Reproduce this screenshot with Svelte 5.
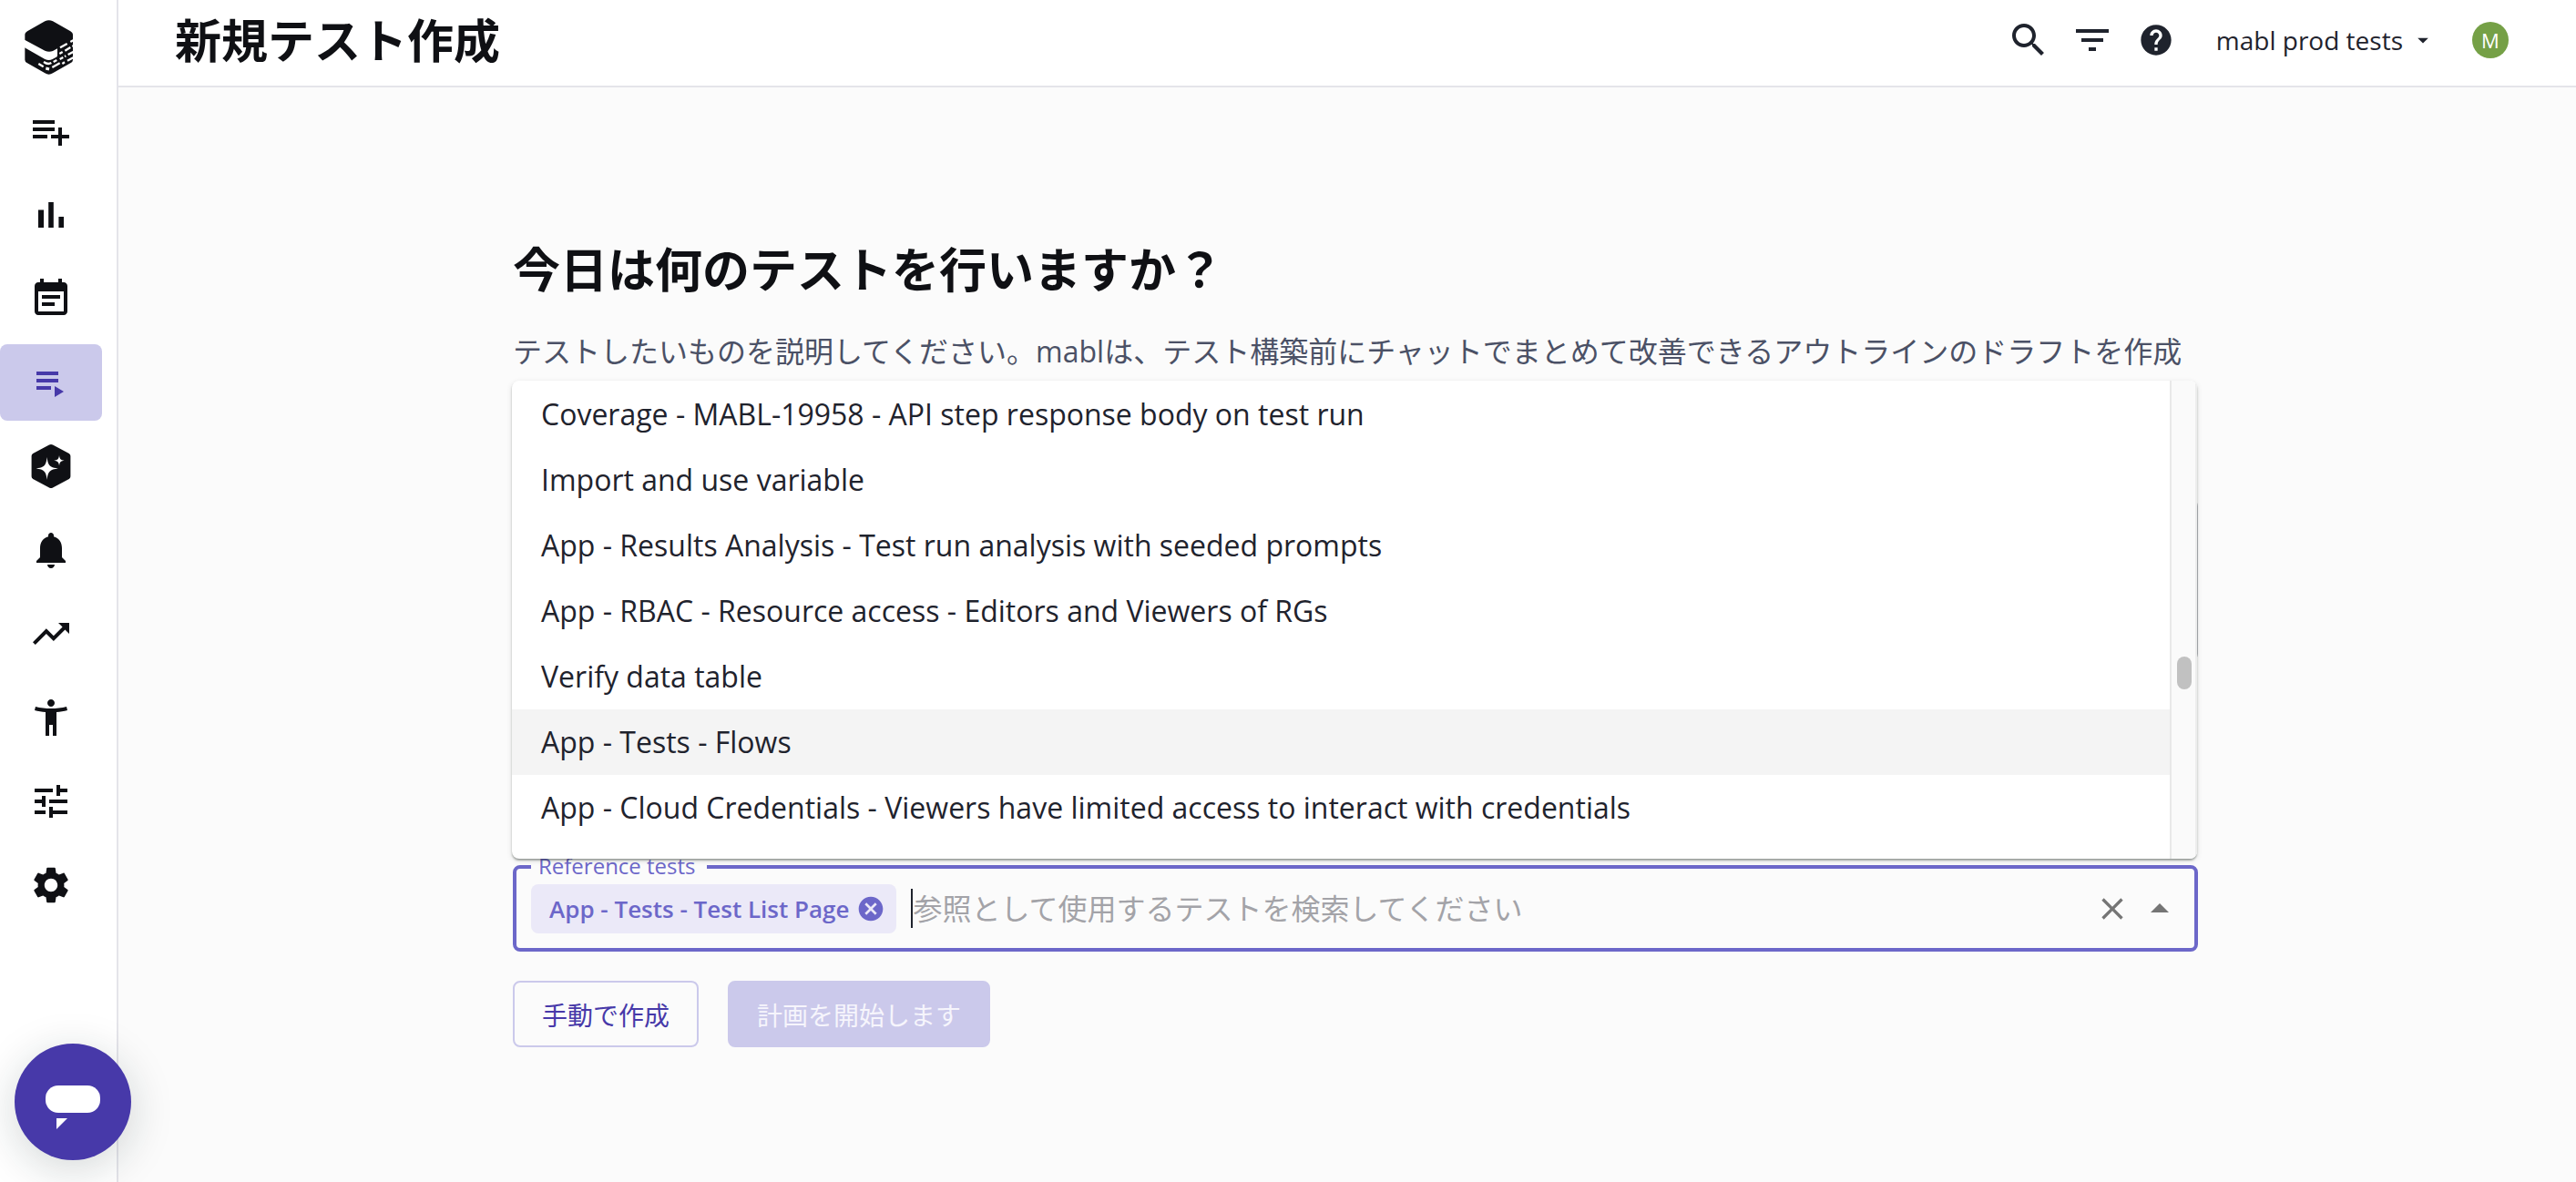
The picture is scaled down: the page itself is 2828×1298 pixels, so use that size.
<script>
  const navItems = [
    { label: '新規作成', d: 'M14 10H2v2h12v-2zm0-4H2v2h12V6zm4 8v-4h-2v4h-4v2h4v4h2v-4h4v-2h-4zM2 16h8v-2H2v2z' },
    { label: 'ダッシュボード', d: 'M5 9.2h3V19H5V9.2zM10.6 5h2.8v14h-2.8V5zm5.6 8H19v6h-2.8v-6z' },
    { label: 'プラン', d: 'M17 10H7v2h10v-2zm2-7h-1V1h-2v2H8V1H6v2H5c-1.11 0-1.99.9-1.99 2L3 19c0 1.1.89 2 2 2h14c1.1 0 2-.9 2-2V5c0-1.1-.9-2-2-2zm0 16H5V8h14v11zm-5-5H7v2h7v-2z' },
    { label: 'テスト', active: true, d: 'M4 10h12v2H4zm0-4h12v2H4zm0 8h8v2H4zm10 0v6l5-3z' },
    { label: 'AI', d: 'M11 .3Q12-.3 13 .3L21.900 5Q22.700 5.500 22.700 6.400V17.600Q22.700 18.500 21.900 19L13 23.700Q12 24.300 11 23.700L2.100 19Q1.300 18.500 1.300 17.600V6.400Q1.300 5.500 2.100 5ZM9.800 7C9.300 11.500 8.300 12.700 3.800 13.200C8.300 13.700 9.300 14.900 9.800 19.400C10.300 14.900 11.300 13.700 15.900 13.200C11.300 12.700 10.300 11.500 9.800 7ZM16.500 6C16.200 8.100 15.700 8.600 13.600 8.900C15.700 9.200 16.200 9.700 16.500 11.600C16.800 9.700 17.300 9.200 19.300 8.900C17.300 8.600 16.800 8.100 16.500 6Z' },
    { label: '通知', d: 'M12 22c1.100 0 2-.9 2-2h-4c0 1.100.89 2 2 2zm6-6v-5c0-3.070-1.640-5.640-4.500-6.320V4c0-.83-.67-1.500-1.500-1.500s-1.500.67-1.500 1.500v.68C7.630 5.360 6 7.920 6 11v5l-2 2v1h16v-1l-2-2z' },
    { label: 'トレンド', d: 'M16 6l2.290 2.290-4.880 4.880-4-4L2 16.590 3.410 18l6-6 4 4 6.300-6.290L22 12V6z' },
    { label: 'アクセシビリティ', d: 'M20.500 6c-2.610.7-5.670 1-8.500 1s-5.890-.3-8.500-1L3 8c1.860.5 4 .83 6 1v13h2v-6h2v6h2V9c2-.17 4.140-.5 6-1l-.5-2zM12 6c1.100 0 2-.9 2-2s-.9-2-2-2-2 .9-2 2 .9 2 2 2z' },
    { label: '構成', d: 'M3 17v2h6v-2H3zM3 5v2h10V5H3zm10 16v-2h8v-2h-8v-2h-2v6h2zM7 9v2H3v2h4v2h2V9H7zm14 4v-2H11v2h10zm-6-4h2V7h4V5h-4V3h-2v6z' },
    { label: '設定', d: 'M19.140 12.940c.04-.3.06-.61.06-.94 0-.32-.02-.64-.07-.94l2.030-1.580c.18-.14.23-.41.12-.61l-1.920-3.320c-.12-.22-.37-.29-.59-.22l-2.390.96c-.5-.38-1.030-.7-1.620-.94l-.36-2.540c-.04-.24-.24-.41-.48-.41h-3.840c-.24 0-.43.17-.47.41l-.36 2.540c-.59.24-1.130.57-1.620.94l-2.390-.96c-.22-.08-.47 0-.59.22L2.740 8.870c-.12.21-.08.47.12.61l2.030 1.580c-.05.3-.09.63-.09.94s.02.64.07.94l-2.030 1.580c-.18.14-.23.41-.12.61l1.920 3.320c.12.22.37.29.59.22l2.390-.96c.5.38 1.030.7 1.620.94l.36 2.540c.05.24.24.41.48.41h3.840c.24 0 .44-.17.47-.41l.36-2.540c.59-.24 1.130-.56 1.620-.94l2.390.96c.22.08.47 0 .59-.22l1.920-3.320c.12-.22.07-.47-.12-.61l-2.010-1.580zM12 15.600c-1.980 0-3.600-1.620-3.600-3.600s1.620-3.600 3.600-3.600 3.600 1.620 3.600 3.600-1.620 3.600-3.600 3.600z' }
  ];

  const options = [
    'Coverage - MABL-19958 - API step response body on test run',
    'Import and use variable',
    'App - Results Analysis - Test run analysis with seeded prompts',
    'App - RBAC - Resource access - Editors and Viewers of RGs',
    'Verify data table',
    'App - Tests - Flows',
    'App - Cloud Credentials - Viewers have limited access to interact with credentials'
  ];
  const highlighted = 5;
  let query = $state('');
</script>

<div class="app">
  <aside class="sidebar">
    <a class="logo" href="#home" aria-label="mabl">
      <svg viewBox="81 66 159 180" width="53" height="60" aria-hidden="true">
        <path fill="#0f1014" d="M148 70Q161 63 174 70L232 103Q240 108 240 113V197Q240 204 232 208L174 241Q161 249 148 241L90 208Q82 204 82 197V113Q82 108 90 103Z" />
        <path fill="#fff" d="M81 131L148 167Q161 173 174 168L189 160V182Q189 187 184 189L173 195Q161 201 148 195L81 157Z" />
        <g stroke="#fff" stroke-width="7" fill="none">
          <path d="M198 157L221 144M232 138L241 133M196 177L206 171M214 167L232 156M238 153L242 151" />
          <path d="M197 195L208 189M224 180L241 171M172 222L197 208M205 210L213 205M222 200L241 190M176 204L187 198M213 186L217 184" />
          <path d="M144 204Q158 214 169 207M127 210L143 220" />
          <path d="M151 225L162 228" stroke-width="9" />
        </g>
      </svg>
    </a>
    <nav class="nav">
      {#each navItems as item}
        <a class="nav-item" class:active={item.active} href="#nav" aria-label={item.label}>
          <svg viewBox="0 0 24 24" width="48" height="48" aria-hidden="true"><path fill-rule="evenodd" d={item.d} /></svg>
        </a>
      {/each}
    </nav>
  </aside>

  <div class="page">
    <header class="topbar">
      <h1>新規テスト作成</h1>
      <div class="tools">
        <button class="icon-btn" aria-label="検索">
          <svg viewBox="0 0 24 24" width="48" height="48"><path d="M15.500 14h-.79l-.28-.27C15.410 12.590 16 11.110 16 9.500 16 5.910 13.090 3 9.500 3S3 5.910 3 9.500 5.910 16 9.500 16c1.610 0 3.090-.59 4.230-1.570l.27.28v.79l5 4.990L20.490 19l-4.990-5zm-6 0C7.010 14 5 11.990 5 9.500S7.010 5 9.500 5 14 7.010 14 9.500 11.990 14 9.500 14z" /></svg>
        </button>
        <button class="icon-btn" aria-label="フィルター">
          <svg viewBox="0 0 24 24" width="48" height="48"><path d="M10 18h4v-2h-4v2zM3 6v2h18V6H3zm3 7h12v-2H6v2z" /></svg>
        </button>
        <button class="icon-btn" aria-label="ヘルプ">
          <svg viewBox="0 0 24 24" width="40" height="40"><path d="M12 2C6.480 2 2 6.480 2 12s4.480 10 10 10 10-4.480 10-10S17.520 2 12 2zm1 17h-2v-2h2v2zm2.070-7.750l-.9.920C13.450 12.900 13 13.500 13 15h-2v-.5c0-1.100.45-2.100 1.170-2.830l1.240-1.260c.37-.36.59-.86.59-1.410 0-1.100-.9-2-2-2s-2 .9-2 2H8c0-2.210 1.790-4 4-4s4 1.790 4 4c0 .88-.36 1.680-.93 2.250z" /></svg>
        </button>
      </div>
      <button class="workspace">
        mabl prod tests
        <svg viewBox="0 0 24 24" width="28" height="28" aria-hidden="true"><path d="M7 10l5 5 5-5z" /></svg>
      </button>
      <button class="avatar" aria-label="アカウント">M</button>
    </header>

    <main>
      <div class="content">
        <h2>今日は何のテストを行いますか？</h2>
        <p class="lead">テストしたいものを説明してください。mablは、テスト構築前にチャットでまとめて改善できるアウトラインのドラフトを作成</p>
        <textarea class="prompt" aria-label="テストの説明"></textarea>

        <div class="field">
          <label for="reference-tests">Reference tests</label>
          <span class="chip">
            App - Tests - Test List Page
            <button aria-label="削除">
              <svg viewBox="0 0 24 24" width="32" height="32"><path d="M12 2C6.470 2 2 6.470 2 12s4.470 10 10 10 10-4.470 10-10S17.530 2 12 2zm5 13.590L15.590 17 12 13.410 8.410 17 7 15.590 10.590 12 7 8.410 8.410 7 12 10.590 15.590 7 17 8.410 13.410 12 17 15.590z" /></svg>
            </button>
          </span>
          <span class="caret"></span>
          <input id="reference-tests" type="text" role="combobox" aria-expanded="true" aria-controls="reference-options" placeholder="参照として使用するテストを検索してください" bind:value={query} />
          <button class="end-btn" aria-label="クリア">
            <svg viewBox="0 0 24 24" width="40" height="40"><path d="M19 6.410L17.590 5 12 10.590 6.410 5 5 6.410 10.590 12 5 17.590 6.410 19 12 13.410 17.590 19 19 17.590 13.410 12z" /></svg>
          </button>
          <button class="end-btn" aria-label="閉じる">
            <svg viewBox="0 0 24 24" width="48" height="48"><path d="M7 14l5-5 5 5z" /></svg>
          </button>

          <div class="popup">
            <ul id="reference-options" role="listbox" aria-label="Reference tests">
              {#each options as option, i}
                <li role="option" aria-selected="false" class:highlighted={i === highlighted}>{option}</li>
              {/each}
            </ul>
            <div class="track"><div class="thumb"></div></div>
          </div>
        </div>

        <div class="actions">
          <button class="btn outlined">手動で作成</button>
          <button class="btn filled" disabled>計画を開始します</button>
        </div>
      </div>
    </main>
  </div>

  <button class="chat" aria-label="チャット">
    <svg viewBox="0 0 60 48" width="60" height="48"><rect width="60" height="30" rx="14" /><path d="M12 36h12L12 48z" /></svg>
  </button>
</div>

<style>
  :global(body) {
    margin: 0;
    background: #fbfbfb;
  }
  .app {
    display: flex;
    min-height: 100vh;
    font-family: 'Open Sans', 'Noto Sans CJK JP', sans-serif;
    font-size: 32px;
    color: #1f232d;
  }
  svg {
    display: block;
    fill: currentColor;
  }
  button {
    font: inherit;
    color: inherit;
    background: none;
    border: 0;
    padding: 0;
    cursor: pointer;
  }
  h1, h2, p, ul {
    margin: 0;
    padding: 0;
  }
  h1, h2 {
    font-size: 52px;
    line-height: 72px;
    font-weight: 700;
    color: #0f1014;
  }
  h1 {
    font-size: 51px;
  }

  .sidebar {
    flex: none;
    box-sizing: border-box;
    width: 130px;
    background: #fff;
    border-right: 2px solid #e4e4ea;
    color: #0f1014;
  }
  .logo {
    display: block;
    padding: 22px 0 20px 27px;
  }
  .nav {
    display: grid;
    gap: 8px;
  }
  .nav-item {
    display: grid;
    place-items: center;
    width: 112px;
    height: 84px;
    border-radius: 8px;
    color: inherit;
  }
  .nav-item.active {
    background: #cbc9eb;
    color: #4739a9;
  }

  .page {
    flex: 1;
    min-width: 0;
  }
  .topbar {
    display: flex;
    align-items: center;
    box-sizing: border-box;
    height: 96px;
    padding: 0 74px 6px 62px;
    background: #fff;
    border-bottom: 2px solid #e4e4ea;
  }
  .tools {
    display: flex;
    gap: 22px;
    margin-left: auto;
  }
  .icon-btn {
    display: grid;
    place-items: center;
    width: 48px;
    height: 48px;
  }
  .workspace {
    display: flex;
    align-items: center;
    gap: 8px;
    margin: 0 40px 0 42px;
    font-size: 28px;
  }
  .avatar {
    width: 40px;
    height: 40px;
    border-radius: 50%;
    background: #75a046;
    color: #fff;
    font-size: 22px;
    line-height: 40px;
  }

  main {
    padding: 164px 0 0 18px;
  }
  .content {
    max-width: 1850px;
    margin: 0 auto;
  }
  .lead {
    margin-top: 30px;
    line-height: 48px;
    color: #4b5166;
  }
  .prompt {
    display: block;
    box-sizing: border-box;
    width: 100%;
    height: 178px;
    margin-top: 138px;
    border: 2px solid #b4b5bb;
    border-radius: 8px;
    background: transparent;
    resize: none;
  }
  .field {
    position: relative;
    display: flex;
    align-items: center;
    box-sizing: border-box;
    height: 95px;
    margin-top: 224px;
    padding: 0 14px 0 16px;
    border: 4px solid #6c67c9;
    border-radius: 8px;
  }
  label {
    position: absolute;
    top: -19px;
    left: 16px;
    padding: 0 12px 0 8px;
    background: #fbfbfb;
    color: #6c67c9;
    font-size: 24px;
    line-height: 32px;
  }
  .chip {
    display: flex;
    align-items: center;
    gap: 8px;
    height: 54px;
    padding: 0 12px 0 20px;
    border-radius: 8px;
    background: #ebe9f8;
    color: #6c67c9;
    font-size: 26px;
    font-weight: 600;
    white-space: nowrap;
  }
  .caret {
    width: 2px;
    height: 43px;
    margin-left: 16px;
    background: #1f232d;
  }
  input {
    flex: 1;
    min-width: 0;
    padding: 0;
    border: 0;
    outline: 0;
    background: none;
    font: inherit;
    color: inherit;
  }
  input::placeholder {
    color: #a3a3a8;
    opacity: 1;
  }
  .end-btn {
    color: #757575;
    margin-left: 8px;
  }

  .popup {
    position: absolute;
    bottom: 98px;
    left: -5px;
    right: -3px;
    display: flex;
    height: 525px;
    overflow: hidden;
    border-radius: 8px;
    background: #fff;
    box-shadow: 0 4px 2px -4px rgba(15, 25, 20, 0.3), 0 2px 2px rgba(15, 25, 20, 0.3), 0 2px 6px rgba(15, 25, 20, 0.12);
  }
  ul {
    flex: 1;
    min-width: 0;
    padding-top: 1px;
    list-style: none;
  }
  li {
    padding: 0 32px;
    line-height: 72px;
    white-space: nowrap;
  }
  li.highlighted {
    background: #f4f4f4;
  }
  .track {
    box-sizing: border-box;
    width: 30px;
    padding: 303px 4px 0 6px;
    border-left: 2px solid #e8e8e8;
    border-right: 2px solid #ededed;
    background: #fafafa;
  }
  .thumb {
    width: 16px;
    height: 36px;
    border-radius: 8px;
    background: #c1c1c1;
  }

  .actions {
    display: flex;
    gap: 32px;
    margin-top: 32px;
  }
  .btn {
    box-sizing: border-box;
    height: 73px;
    padding: 0 30px;
    border: 2px solid #cbc9eb;
    border-radius: 8px;
    font-size: 28px;
    color: #4739a9;
  }
  .btn.filled {
    background: #cbc9eb;
    color: #f6f5fc;
  }

  .chat {
    position: fixed;
    left: 16px;
    bottom: 24px;
    display: grid;
    place-items: center;
    width: 128px;
    height: 128px;
    padding-top: 12px;
    border-radius: 50%;
    background: #4739a9;
    color: #fff;
    box-shadow: 0 10px 48px rgba(15, 40, 40, 0.18);
  }
</style>
